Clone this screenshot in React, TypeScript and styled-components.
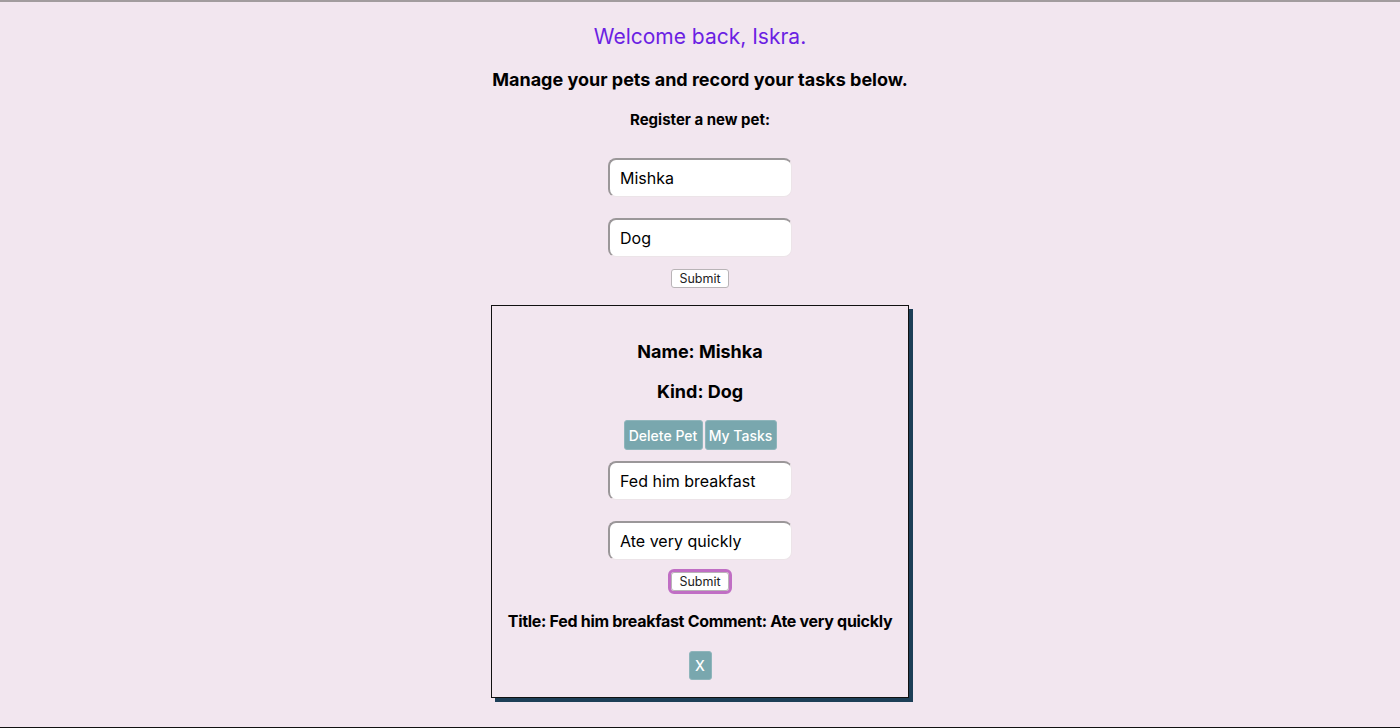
import React from "react";
import styled, { createGlobalStyle } from "styled-components";

const Global = createGlobalStyle`
  html, body { margin: 0; padding: 0; }
  body {
    background: #f2e6ef;
    font-family: Inter, "Liberation Sans", Arial, sans-serif;
    color: #000;
  }
  * { box-sizing: border-box; }
`;

const Page = styled.div`
  height: 728px;
  border-top: 2px solid #a29c9e;
  border-bottom: 1px solid #111;
  display: flex;
  flex-direction: column;
  align-items: center;
  padding-top: 22px;
`;

const Welcome = styled.h1`
  margin: 0;
  font-size: 21px;
  line-height: 26px;
  font-weight: 400;
  color: #6b1fe3;
`;

const Heading = styled.h2<{ $size: number; $top: number; $ls?: number }>`
  margin: ${(p) => p.$top}px 0 0;
  font-size: ${(p) => p.$size}px;
  line-height: ${(p) => p.$size + 4}px;
  letter-spacing: ${(p) => p.$ls ?? 0}px;
  font-weight: 700;
  text-align: center;
`;

const Form = styled.form<{ $top: number }>`
  display: flex;
  flex-direction: column;
  align-items: center;
  margin-top: ${(p) => p.$top}px;
`;

const Field = styled.input<{ $top?: number }>`
  width: 184px;
  height: 39px;
  margin-top: ${(p) => p.$top ?? 0}px;
  padding: 0 10px;
  border-radius: 8px;
  background: #fff;
  border-top: 2px solid #9b9799;
  border-left: 2px solid #9b9799;
  border-right: 1px solid #ece4e8;
  border-bottom: 1px solid #ece4e8;
  font-family: inherit;
  font-size: 16px;
  color: #000;
  outline: none;
`;

const SubmitButton = styled.button<{ $top: number; $focused?: boolean }>`
  margin-top: ${(p) => p.$top}px;
  height: 19px;
  padding: 0 7px;
  background: #fff;
  border: 1px solid #b9b4b7;
  border-radius: 3px;
  font-family: inherit;
  font-size: 12.5px;
  color: #222;
  outline: ${(p) => (p.$focused ? "3px solid #c06ec4" : "none")};
  outline-offset: 0;
`;

const Card = styled.div`
  margin-top: 17px;
  width: 418px;
  height: 393px;
  border: 1px solid #111;
  box-shadow: 4px 4px 0 #1d3f57;
  display: flex;
  flex-direction: column;
  align-items: center;
  padding-top: 34px;
`;

const Actions = styled.div`
  display: flex;
  gap: 2px;
  margin-top: 17px;
`;

const TealButton = styled.button<{ $w: number; $h: number }>`
  width: ${(p) => p.$w}px;
  height: ${(p) => p.$h}px;
  padding: 0;
  background: #79a7ae;
  border: 1px solid #8fb5bb;
  border-radius: 3px;
  color: #fff;
  font-family: inherit;
  font-size: 14px;
  font-weight: 500;
`;

const XWrap = styled.div`
  margin-top: 20px;
`;

export default function App() {
  return (
    <>
      <Global />
      <Page>
        <Welcome>Welcome back, Iskra.</Welcome>
        <Heading $size={18} $top={19}>Manage your pets and record your tasks below.</Heading>
        <Heading $size={15} $top={19}>Register a new pet:</Heading>
        <Form $top={29} onSubmit={(e) => e.preventDefault()}>
          <Field defaultValue="Mishka" />
          <Field defaultValue="Dog" $top={21} />
          <SubmitButton $top={12}>Submit</SubmitButton>
        </Form>
        <Card>
          <Heading $size={18} $top={1}>Name: Mishka</Heading>
          <Heading $size={18} $top={18}>Kind: Dog</Heading>
          <Actions>
            <TealButton $w={79} $h={30}>Delete Pet</TealButton>
            <TealButton $w={72} $h={30}>My Tasks</TealButton>
          </Actions>
          <Form $top={11} onSubmit={(e) => e.preventDefault()}>
            <Field defaultValue="Fed him breakfast" />
            <Field defaultValue="Ate very quickly" $top={21} />
            <SubmitButton $top={12} $focused>Submit</SubmitButton>
          </Form>
          <Heading $size={16} $top={20} $ls={-0.3}>Title: Fed him breakfast Comment: Ate very quickly</Heading>
          <XWrap>
            <TealButton $w={23} $h={29}>X</TealButton>
          </XWrap>
        </Card>
      </Page>
    </>
  );
}
